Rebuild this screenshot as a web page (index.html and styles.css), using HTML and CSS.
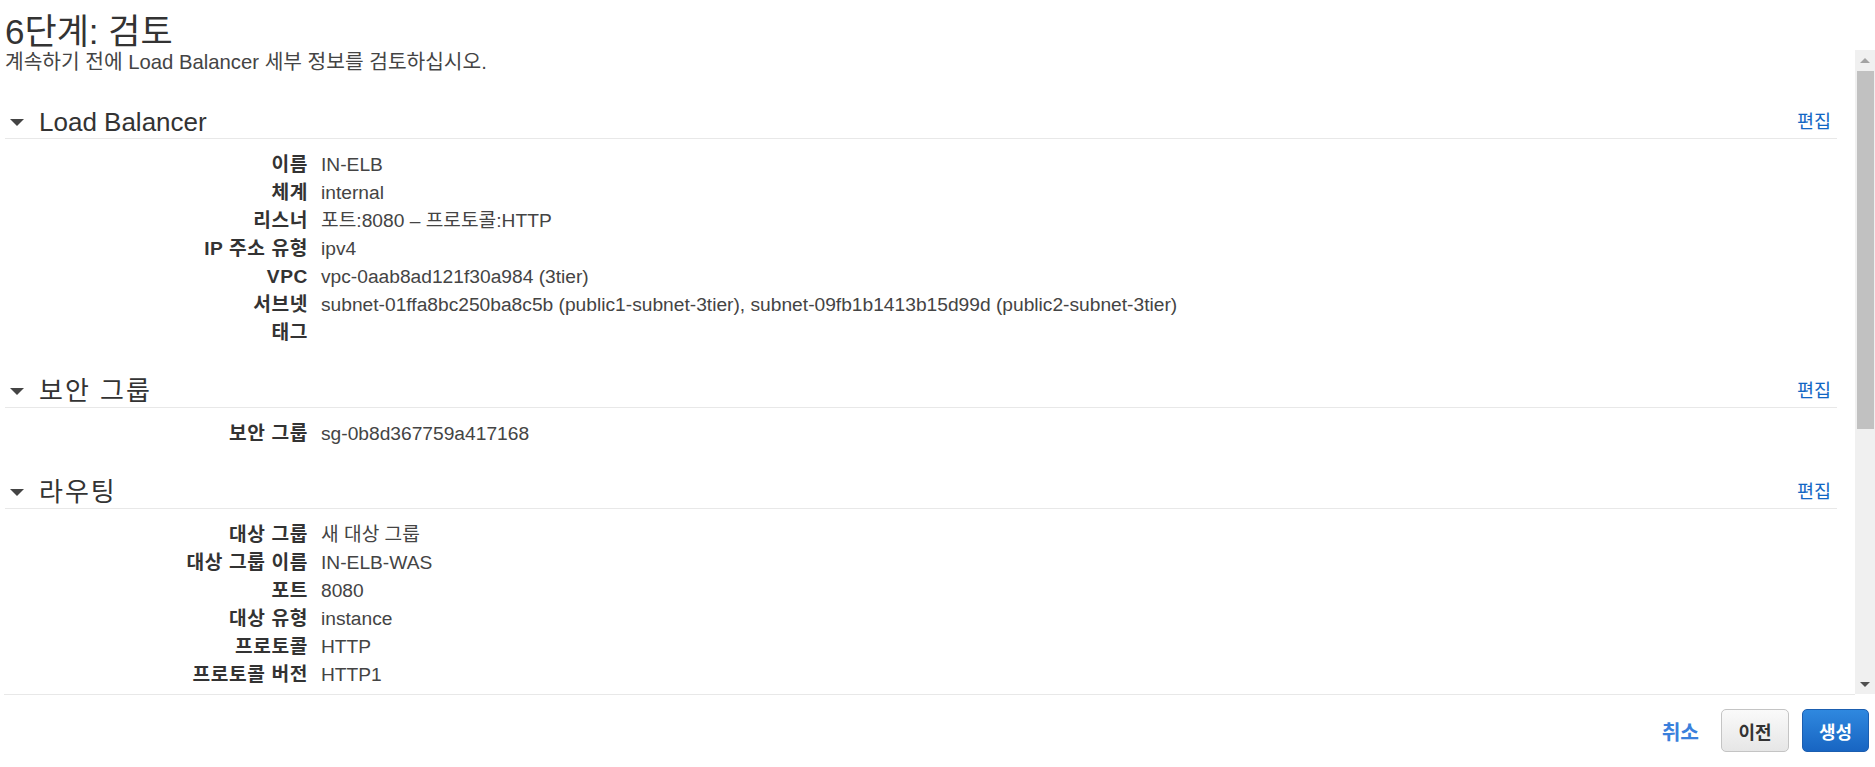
FILE: index.html
```html
<!DOCTYPE html>
<html lang="ko">
<head>
<meta charset="utf-8">
<title>6단계: 검토</title>
<link rel="stylesheet" href="styles.css">
</head>
<body>
<div class="page">
  <h1 class="title">6단계: 검토</h1>
  <div class="review">
    <div class="review-content">
      <p class="subtitle">계속하기 전에 Load Balancer 세부 정보를 검토하십시오.</p>

      <section class="section">
        <div class="section-head">
          <span class="caret"></span>
          <h2 class="section-title">Load Balancer</h2>
          <a class="edit" href="#">편집</a>
        </div>
        <dl class="details">
          <dt>이름</dt><dd>IN-ELB</dd>
          <dt>체계</dt><dd>internal</dd>
          <dt>리스너</dt><dd>포트:8080 – 프로토콜:HTTP</dd>
          <dt>IP 주소 유형</dt><dd>ipv4</dd>
          <dt>VPC</dt><dd>vpc-0aab8ad121f30a984 (3tier)</dd>
          <dt>서브넷</dt><dd>subnet-01ffa8bc250ba8c5b (public1-subnet-3tier), subnet-09fb1b1413b15d99d (public2-subnet-3tier)</dd>
          <dt>태그</dt><dd></dd>
        </dl>
      </section>

      <section class="section">
        <div class="section-head">
          <span class="caret"></span>
          <h2 class="section-title section-title--ko">보안 그룹</h2>
          <a class="edit" href="#">편집</a>
        </div>
        <dl class="details">
          <dt>보안 그룹</dt><dd>sg-0b8d367759a417168</dd>
        </dl>
      </section>

      <section class="section">
        <div class="section-head">
          <span class="caret"></span>
          <h2 class="section-title section-title--ko">라우팅</h2>
          <a class="edit" href="#">편집</a>
        </div>
        <dl class="details">
          <dt>대상 그룹</dt><dd>새 대상 그룹</dd>
          <dt>대상 그룹 이름</dt><dd>IN-ELB-WAS</dd>
          <dt>포트</dt><dd>8080</dd>
          <dt>대상 유형</dt><dd>instance</dd>
          <dt>프로토콜</dt><dd>HTTP</dd>
          <dt>프로토콜 버전</dt><dd>HTTP1</dd>
        </dl>
      </section>
    </div>
    <div class="scrollbar" aria-hidden="true">
      <div class="sb-btn"><span class="sb-arrow-up"></span></div>
      <div class="sb-track"><div class="sb-thumb"></div></div>
      <div class="sb-btn"><span class="sb-arrow-down"></span></div>
    </div>
  </div>
  <div class="footer">
    <a class="cancel" href="#">취소</a>
    <button class="btn btn-secondary" type="button">이전</button>
    <button class="btn btn-primary" type="button">생성</button>
  </div>
</div>
</body>
</html>
```

FILE: styles.css
```css
* {
  box-sizing: border-box;
}

html,
body {
  margin: 0;
  padding: 0;
  background: #ffffff;
}

body {
  font-family: "Liberation Sans", Arial, "Noto Sans CJK KR", sans-serif;
  font-size: 19.2px;
  color: #444444;
  width: 1875px;
  height: 767px;
  overflow: hidden;
}

.title {
  margin: 0;
  height: 50px;
  padding: 13px 0 0 5px;
  font-size: 35px;
  line-height: 37px;
  font-weight: normal;
  color: #333333;
}

.review {
  display: flex;
  height: 645px;
}

.review-content {
  flex: 1;
  min-width: 0;
  margin-left: 4px;
  padding: 0 18px 0 1px;
  border-bottom: 1px solid #e8e8e8;
  overflow: hidden;
}

.subtitle {
  margin: 0 0 32px;
  font-size: 20.3px;
  line-height: 24px;
}

.section {
  margin-bottom: 28px;
}

.section-head {
  display: flex;
  align-items: center;
  height: 33px;
  padding: 0 6px 0 5px;
  border-bottom: 1px solid #e8e8e8;
}

.caret {
  width: 0;
  height: 0;
  border-left: 7px solid transparent;
  border-right: 7px solid transparent;
  border-top: 7px solid #444444;
  margin-right: 15px;
}

.section-title {
  flex: 1;
  margin: 0;
  font-size: 26px;
  line-height: 32px;
  font-weight: normal;
  color: #333333;
}

.section-title--ko {
  letter-spacing: 2px;
}

.edit {
  font-size: 18.5px;
  line-height: 32px;
  color: #1166c4;
  text-decoration: none;
}

.details {
  margin: 0;
  padding-top: 12px;
  display: grid;
  grid-template-columns: 303px 1fr;
  column-gap: 13px;
  line-height: 28px;
}

.details dt {
  text-align: right;
  font-weight: bold;
  letter-spacing: 0.6px;
  color: #333333;
  white-space: nowrap;
}

.details dd {
  margin: 0;
  color: #444444;
  white-space: nowrap;
}

.scrollbar {
  flex-shrink: 0;
  width: 20px;
  height: 644px;
  background: #f0f0f0;
  display: flex;
  flex-direction: column;
}

.sb-btn {
  height: 20px;
  display: flex;
  align-items: center;
  justify-content: center;
}

.sb-arrow-up {
  width: 0;
  height: 0;
  border-left: 5px solid transparent;
  border-right: 5px solid transparent;
  border-bottom: 5px solid #a3a3a3;
}

.sb-arrow-down {
  width: 0;
  height: 0;
  border-left: 5px solid transparent;
  border-right: 5px solid transparent;
  border-top: 5px solid #505050;
}

.sb-track {
  flex: 1;
  padding: 1px 1px 0 2px;
}

.sb-thumb {
  height: 358px;
  background: #c1c1c1;
}

.footer {
  display: flex;
  justify-content: flex-end;
  align-items: center;
  height: 72px;
  padding: 14px 6px 15px 0;
}

.cancel {
  font-size: 20.3px;
  font-weight: bold;
  color: #3a80dc;
  text-decoration: none;
  margin-right: 22px;
}

.btn {
  height: 43px;
  padding: 0;
  border-radius: 5px;
  font-family: inherit;
  font-size: 18px;
  font-weight: bold;
  cursor: pointer;
}

.btn-secondary {
  width: 68px;
  border: 1px solid #c4c4c4;
  background: linear-gradient(#fafafa, #e6e6e6);
  color: #333333;
  margin-right: 13px;
}

.btn-primary {
  width: 67px;
  border: 1px solid #1b5eb0;
  background: linear-gradient(#2f88df, #1865c2);
  color: #ffffff;
}
```
